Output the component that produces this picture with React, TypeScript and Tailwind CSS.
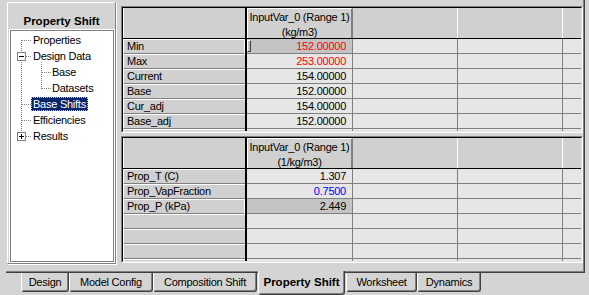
type Row = {
  label: string;
  value: string;
  color?: string;
  active?: boolean;
  caret?: boolean;
};

const upperRows: Row[] = [
  { label: "Min", value: "152.00000", color: "text-[#ff0000]", active: true, caret: true },
  { label: "Max", value: "253.00000", color: "text-[#ff0000]" },
  { label: "Current", value: "154.00000" },
  { label: "Base", value: "152.00000" },
  { label: "Cur_adj", value: "154.00000" },
  { label: "Base_adj", value: "152.00000" },
  { label: "", value: "" },
];

const lowerRows: Row[] = [
  { label: "Prop_T (C)", value: "1.307" },
  { label: "Prop_VapFraction", value: "0.7500", color: "text-[#0000ff]" },
  { label: "Prop_P (kPa)", value: "2.449", active: true },
  { label: "", value: "" },
  { label: "", value: "" },
  { label: "", value: "" },
  { label: "", value: "" },
];

const treeItems = [
  { text: "Properties", child: false },
  { text: "Design Data", child: false },
  { text: "Base", child: true },
  { text: "Datasets", child: true },
  { text: "Base Shifts", child: false, selected: true },
  { text: "Efficiencies", child: false },
  { text: "Results", child: false },
];

const tabs = [
  { name: "Design", w: "w-[48px]" },
  { name: "Model Config", w: "w-[84px]" },
  { name: "Composition Shift", w: "w-[104px]" },
  { name: "Property Shift", w: "w-[87px]", selected: true },
  { name: "Worksheet", w: "w-[71px]" },
  { name: "Dynamics", w: "w-[64px]" },
];

const Grid = ({ unit, rows }: { unit: string; rows: Row[] }) => {
  return (
    <div className="h-[127px] border border-t-[#808080] border-l-[#808080] border-r-white border-b-white">
      <div className="h-full overflow-hidden border border-t-black border-l-black border-r-[#e4e4e4] border-b-[#e4e4e4] bg-[#d4d4d4]">
        {/* header */}
        <div className="flex h-[31px] border-b border-black">
          <div className="w-[122px] border-l border-white bg-[#d0d0d0]" />
          <div className="w-[2px] bg-black" />
          <div className="w-[106px] border-l border-t border-white border-r-2 border-r-[#808080] bg-[#d0d0d0] pt-[1px] text-center leading-[15px] whitespace-nowrap">
            InputVar_0 (Range 1)
            <br />({unit})
          </div>
          <div className="w-[105px] border-r border-white bg-[#d0d0d0]" />
          <div className="w-[105px] border-r border-white bg-[#d0d0d0]" />
          <div className="flex-1 bg-[#d0d0d0]" />
        </div>
        {rows.map((r, i) => (
          <div key={i} className="flex h-[15px]">
            <div
              className={`w-[122px] border-l border-t border-white border-b border-b-[#808080] bg-[#d0d0d0] pl-[3px] leading-[13px] whitespace-nowrap ${
                r.active ? "border-r border-r-white" : ""
              }`}
            >
              {r.label}
            </div>
            <div className="w-[2px] bg-black" />
            <div
              className={`flex w-[106px] border-r border-b border-[#808080] pr-[6px] leading-[14px] ${
                r.active ? "bg-[#c4c4c4]" : "bg-[#e6e6e6]"
              } ${r.color ?? ""}`}
            >
              {r.caret && (
                <div className="mt-[1px] h-[12px] w-[4px] shrink-0 border border-l-white border-t-white border-r-[#404040] border-b-[#404040]" />
              )}
              <span className="ml-auto">{r.value}</span>
            </div>
            <div className="w-[105px] border-r border-b border-[#808080] bg-[#e6e6e6]" />
            <div className="w-[105px] border-r border-b border-[#808080] bg-[#e6e6e6]" />
            <div className="flex-1 border-b border-[#808080] bg-[#e6e6e6]" />
          </div>
        ))}
      </div>
    </div>
  );
};

const TreeLines = () => (
  <svg className="absolute left-0 top-0" width="102" height="120" shapeRendering="crispEdges">
    <g stroke="#808080" strokeDasharray="1 1" fill="none">
      <path d="M10.5 9 V105" />
      <path d="M11 9.5 H21" />
      <path d="M15 25.5 H21" />
      <path d="M11 73.5 H21" />
      <path d="M11 89.5 H21" />
      <path d="M15 105.5 H21" />
      <path d="M30.5 31 V58" />
      <path d="M31 41.5 H40" />
      <path d="M31 57.5 H40" />
    </g>
    <g>
      <rect x="6.5" y="21.5" width="8" height="8" fill="#fff" stroke="#808080" />
      <path d="M8 25.5 H13" stroke="#000" />
      <rect x="6.5" y="101.5" width="8" height="8" fill="#fff" stroke="#808080" />
      <path d="M8 105.5 H13 M10.5 103 V108" stroke="#000" />
    </g>
  </svg>
);

export default function App() {
  return (
    <div className="flex h-[295px] w-[589px] flex-col bg-[#d4d4d4] text-[11px] tracking-[-0.25px] text-black [font-family:'Liberation_Sans',Arial,sans-serif]">
      <div className="ml-[6px] flex h-[273px] w-[579px] border-r border-b border-[#404040] pl-[1px] pt-[2px] shadow-[inset_-1px_-1px_0_#808080]">
        {/* left panel */}
        <div className="h-[262px] w-[109px] border border-t-white border-l-white border-r-[#808080] border-b-[#808080] shadow-[1px_1px_0_#fff]">
          <div className="h-[26px] pt-[11px] text-center text-[11.5px] font-bold leading-[14px] tracking-normal">
            Property Shift
          </div>
          <div className="ml-[1px] h-[234px] w-[106px] border border-white">
            <div className="relative h-full border border-[#808080] bg-white pt-[1px]">
              <TreeLines />
              {treeItems.map((t) => (
                <div
                  key={t.text}
                  className={`relative h-[16px] leading-[16px] whitespace-nowrap ${
                    t.selected ? "pl-[20px]" : t.child ? "pl-[41px]" : "pl-[22px]"
                  }`}
                >
                  {t.selected ? (
                    <span className="mt-[1px] inline-block h-[14px] border border-dotted border-[#c0c0c0] bg-[#0a246a] px-[1px] align-top leading-[12px] text-white">
                      {t.text}
                    </span>
                  ) : (
                    t.text
                  )}
                </div>
              ))}
            </div>
          </div>
        </div>
        {/* grids */}
        <div className="ml-[5px] mt-[4px] flex w-[462px] flex-col gap-[3px]">
          <Grid unit="kg/m3" rows={upperRows} />
          <Grid unit="1/kg/m3" rows={lowerRows} />
        </div>
      </div>
      {/* tabs */}
      <div className="flex pl-[21px]">
        {tabs.map((t) =>
          t.selected ? (
            <div
              key={t.name}
              className={`relative z-10 -mt-[2px] ml-[1px] h-[24px] ${t.w} rounded-b-[3px] border-l border-white border-r border-b border-r-[#404040] border-b-[#404040] bg-[#d4d4d4] text-center text-[11.5px] font-bold leading-[22px] tracking-normal shadow-[inset_-1px_-1px_0_#808080]`}
            >
              {t.name}
            </div>
          ) : (
            <div
              key={t.name}
              className={`h-[19px] ${t.w} ${t.name === "Worksheet" ? "ml-[1px]" : ""} rounded-b-[3px] border-l border-white border-r border-b border-r-[#404040] border-b-[#404040] text-center leading-[18px] shadow-[inset_-1px_-1px_0_#808080]`}
            >
              {t.name}
            </div>
          )
        )}
      </div>
    </div>
  );
}
